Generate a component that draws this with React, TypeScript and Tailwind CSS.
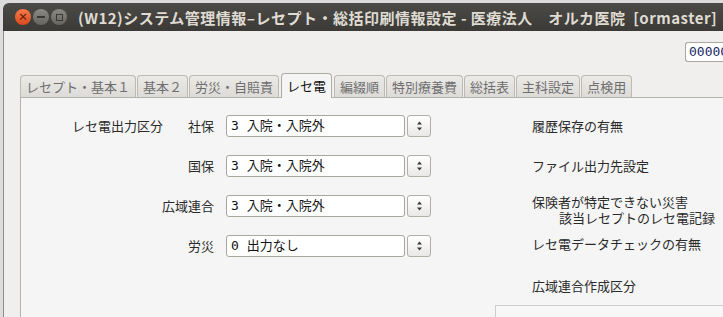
import React from "react";

const jp = "font-['Noto_Sans_CJK_JP',sans-serif]";
const mono = "font-['DejaVu_Sans_Mono','Noto_Sans_CJK_JP',monospace]";

const tabs = ["レセプト・基本１", "基本２", "労災・自賠責", "レセ電", "編綴順", "特別療養費", "総括表", "主科設定", "点検用"];

const rows = [
  { group: "レセ電出力区分", label: "社保", value: "3 入院・入院外" },
  { group: "", label: "国保", value: "3 入院・入院外" },
  { group: "", label: "広域連合", value: "3 入院・入院外" },
  { group: "", label: "労災", value: "0 出力なし" },
];

function Spinner() {
  return (
    <button className="ml-[2px] w-[24px] h-[22px] rounded-[3px] border border-[#b3afa8] bg-gradient-to-b from-[#ffffff] to-[#e9e8e6] flex items-center justify-center">
      <svg width="7" height="12" viewBox="0 0 7 12">
        <path d="M3.5 1.5 L6 4.5 L1 4.5 Z" fill="#3a3a3a" />
        <path d="M3.5 10.5 L6 7.5 L1 7.5 Z" fill="#3a3a3a" />
      </svg>
    </button>
  );
}

function Circle({ color, children }: { color: string; children: React.ReactNode }) {
  return (
    <div className={`w-[16px] h-[16px] rounded-full flex items-center justify-center ${color}`}>{children}</div>
  );
}

export default function App() {
  return (
    <div className={`w-[723px] h-[317px] overflow-hidden bg-[#dcdcdc] pl-[3px] pt-[3px] ${jp}`}>
      <div className="w-[740px] h-full flex flex-col">
        {/* title bar */}
        <div className="h-[28px] shrink-0 rounded-tl-[6px] bg-gradient-to-b from-[#4b4a46] to-[#3b3a36] flex items-center">
          <div className="flex items-center gap-[2px] ml-[12px]">
            <Circle color="bg-gradient-to-b from-[#f7794a] to-[#d9491a]">
              <span className="text-[10px] leading-none text-[#5a1a05] font-bold">×</span>
            </Circle>
            <Circle color="bg-gradient-to-b from-[#8a8983] to-[#65645f]">
              <span className="w-[8px] h-[2px] bg-[#3a3935]" />
            </Circle>
            <Circle color="bg-gradient-to-b from-[#8a8983] to-[#65645f]">
              <span className="w-[7px] h-[7px] border border-[#3a3935]" />
            </Circle>
          </div>
          <div className="ml-[11px] text-[15px] font-bold tracking-[0.5px] text-[#dfdbd2] whitespace-pre leading-none">
            (W12)システム管理情報–レセプト・総括印刷情報設定 - 医療法人　オルカ医院  [ormaster]
          </div>
        </div>

        {/* window body */}
        <div className="flex-1 flex flex-col bg-[#f0efed] border-l border-[#8f8d88]">
          <div className="flex justify-end mt-[11px] h-[20px]">
            <div className={`w-[58px] h-[20px] border border-[#aaa6a0] border-r-0 rounded-l-[3px] bg-white pl-[3px] text-[13px] leading-[18px] text-[#1a2a66] whitespace-nowrap overflow-hidden ${mono}`}>
              000000
            </div>
          </div>

          {/* tabs */}
          <div className="flex items-end gap-[1px] ml-[16px] mt-[10px] h-[25px]">
            {tabs.map((t) =>
              t === "レセ電" ? (
                <div
                  key={t}
                  className="relative z-10 -mb-px mx-[1px] h-[25px] px-[5px] rounded-t-[4px] border border-b-0 border-[#aeaaa4] bg-[#f5f5f5] text-[13px] leading-[23px] text-[#111]"
                >
                  {t}
                </div>
              ) : (
                <div
                  key={t}
                  className="h-[22px] px-[5px] rounded-t-[4px] border border-b-0 border-[#bdbab4] bg-gradient-to-b from-[#eceae7] to-[#dddbd7] text-[13px] leading-[21px] text-[#6e6e6e]"
                >
                  {t}
                </div>
              )
            )}
          </div>

          {/* panel */}
          <div className="flex-1 ml-[16px] border-t border-l border-[#b5b2ac] bg-[#f5f5f5] flex text-[13px] text-[#2a2a2a]">
            <div className="flex flex-col gap-[18px] pt-[17px]">
              {rows.map((r) => (
                <div key={r.label} className="flex items-center h-[22px]">
                  <div className="w-[193px] flex items-center">
                    {r.group && <span className="ml-[51px]">{r.group}</span>}
                    <span className="ml-auto">{r.label}</span>
                  </div>
                  <div className={`ml-[12px] w-[179px] h-[22px] rounded-[3px] border border-[#a9a59f] bg-white pl-[4px] leading-[20px] text-[#111] ${mono}`}>
                    {r.value}
                  </div>
                  <Spinner />
                </div>
              ))}
            </div>

            <div className="ml-[64px] flex flex-col leading-[16px] pt-[20px] flex-1">
              <div className="pl-[37px]">履歴保存の有無</div>
              <div className="pl-[37px] mt-[24px]">ファイル出力先設定</div>
              <div className="pl-[37px] mt-[20px]">保険者が特定できない災害</div>
              <div className="pl-[64px]">該当レセプトのレセ電記録</div>
              <div className="pl-[37px] mt-[10px]">レセ電データチェックの有無</div>
              <div className="pl-[37px] mt-[26px]">広域連合作成区分</div>
              <div className="mt-[11px] h-[20px] border-t border-l border-[#d0cdc8] bg-[#f7f7f7]" />
            </div>
          </div>
        </div>
      </div>
    </div>
  );
}
